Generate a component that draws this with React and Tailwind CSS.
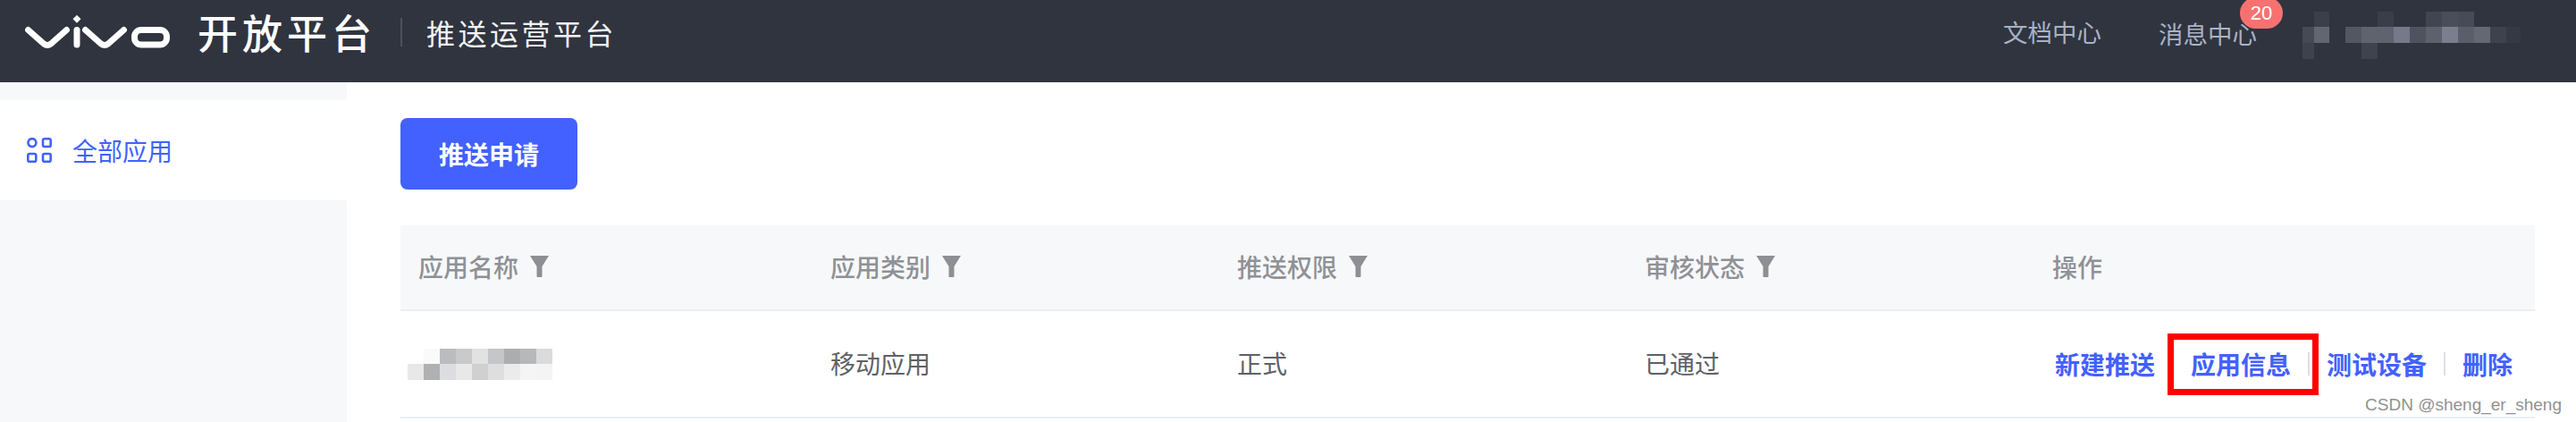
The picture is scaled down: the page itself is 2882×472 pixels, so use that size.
import React from 'react';

const cjk = { fontFamily: '"Noto Sans CJK SC", "Noto Sans", sans-serif' };

// pixelated user name in the header: x, y, w, h, colour
const headerBlur = [
  [13, 0, 17, 17, '#3a3f4a'], [84, 0, 18, 17, '#3b3e49'], [138, 0, 18, 17, '#42454f'], [156, 0, 18, 17, '#4a4e5a'], [174, 0, 18, 17, '#474b58'],
  [0, 17, 13, 18, '#454a55'], [13, 17, 17, 18, '#616672'], [48, 17, 18, 18, '#525863'], [66, 17, 18, 18, '#5f636e'], [84, 17, 18, 18, '#5e636f'],
  [102, 17, 18, 18, '#757a8a'], [120, 17, 18, 18, '#4e5360'], [138, 17, 18, 18, '#5d616d'], [156, 17, 18, 18, '#7a7f90'], [174, 17, 18, 18, '#5a5e6b'],
  [192, 17, 18, 18, '#646875'], [210, 17, 18, 18, '#3f424d'], [228, 17, 16, 18, '#363944'],
  [0, 35, 13, 18, '#3e424d'], [66, 35, 18, 18, '#3f434e'],
];

// pixelated app name in the table
const rowBlur = [
  [18, 0, 18, 17, '#fafafa'], [36, 0, 18, 17, '#bbbcbd'], [54, 0, 18, 17, '#c8c9ca'], [72, 0, 18, 17, '#e2e2e2'], [90, 0, 18, 17, '#c5c6c7'],
  [108, 0, 18, 17, '#acadae'], [126, 0, 18, 17, '#b7b8b9'], [144, 0, 18, 17, '#dbdbdb'],
  [0, 17, 18, 18, '#e8e8e8'], [18, 17, 18, 18, '#b0b1b2'], [36, 17, 18, 18, '#dcdde0'], [54, 17, 18, 18, '#e8e8e8'], [72, 17, 18, 18, '#d0d0d2'],
  [90, 17, 18, 18, '#dedede'], [108, 17, 18, 18, '#ebebeb'], [126, 17, 18, 18, '#f5f5f5'], [144, 17, 18, 18, '#f4f4f4'],
];

const Mosaic = ({ cells, width, height }) => (
  <svg width={width} height={height} viewBox={`0 0 ${width} ${height}`} shapeRendering="crispEdges" className="block shrink-0">
    {cells.map(([x, y, w, h, fill], i) => (
      <rect key={i} x={x} y={y} width={w} height={h} fill={fill} />
    ))}
  </svg>
);

const VivoLogo = () => (
  <svg width="164" height="38" viewBox="28 14 164 38" className="block shrink-0" fill="none" stroke="#fff" strokeWidth="7" strokeLinecap="round" strokeLinejoin="round">
    <path d="M31.5 30.5 L49 46 Q53 49 57 46 L74.5 30.5" />
    <path d="M86 30.5 V47" />
    <path d="M86 13.8 L90.5 18.3 L86 22.8 L81.5 18.3 Z" fill="#fff" stroke="none" />
    <path d="M95.5 30.5 L113 46 Q117 49 121 46 L138.5 30.5" />
    <rect x="150.5" y="30.5" width="36" height="16.5" rx="7.5" />
  </svg>
);

const FilterIcon = () => (
  <svg width="21" height="24" viewBox="0 0 21 24" className="block shrink-0" fill="#8e8f94">
    <path d="M0 0 H21 L13.5 12 V23 Q13.5 24 12.5 24 H8.5 Q7.5 24 7.5 23 V12 Z" />
  </svg>
);

const AppsIcon = () => (
  <svg width="28" height="28" viewBox="0 0 28 28" className="block shrink-0" fill="none" stroke="#4261ff" strokeWidth="2.6">
    <circle cx="5.9" cy="5.6" r="4.5" />
    <rect x="18" y="1.3" width="8.7" height="8.7" rx="1.8" />
    <rect x="1.3" y="18" width="9" height="8.7" rx="1.8" />
    <rect x="18" y="18" width="8.7" height="8.7" rx="1.8" />
  </svg>
);

const columns = ['应用名称', '应用类别', '推送权限', '审核状态'];

const Sep = () => <span className="mx-[19px] h-[26px] w-[2px] shrink-0 bg-[#dcdfe6]" />;

export default function App() {
  return (
    <div className="relative flex h-[472px] w-[2882px] flex-col overflow-hidden bg-white" style={cjk}>
      <header className="flex h-[92px] shrink-0 items-center bg-[#30343f] pb-[20px] pl-[28px] pr-[62px]">
        <VivoLogo />
        <span className="ml-[29px] text-[45px] font-medium leading-[48px] tracking-[5px] text-white whitespace-nowrap">开放平台</span>
        <span className="ml-[27px] h-[32px] w-[2px] bg-[#4d515b]" />
        <span className="ml-[27px] text-[32px] leading-[40px] tracking-[3.5px] text-[#f2f3f5] whitespace-nowrap">推送运营平台</span>
        <div className="ml-auto flex items-center text-[27.5px] leading-[36px] text-[#a9b2c4]">
          <span className="-mt-[2px]">文档中心</span>
          <span className="relative ml-[64px] mt-[2px]">
            消息中心
            <span className="absolute left-[91px] top-[-22px] flex h-[35px] w-[48px] items-center justify-center rounded-full bg-[#f87171] text-[22px] leading-none text-white" style={{ fontFamily: '"Liberation Sans", sans-serif' }}>20</span>
          </span>
          <span className="ml-[51px] mt-[7px]">
            <Mosaic cells={headerBlur} width={244} height={53} />
          </span>
        </div>
      </header>

      <div className="flex flex-1">
        <aside className="w-[388px] shrink-0 bg-[#f7f8fa] pt-[20px]">
          <div className="flex h-[112px] items-center bg-white pl-[30px] text-[28px] text-[#4261ff]">
            <AppsIcon />
            <span className="ml-[23px]">全部应用</span>
          </div>
        </aside>

        <main className="flex-1 pl-[60px] pr-[46px] pt-[40px]">
          <button className="flex h-[80px] w-[198px] items-center justify-center rounded-lg bg-[#4261ff] text-[28px] font-bold text-white">推送申请</button>

          <div className="mt-[40px] grid grid-cols-[461px_455px_456px_456px_1fr] border-b-2 border-b-[#ebeef3]">
            {columns.map((c) => (
              <div key={c} className="flex h-[96px] items-center gap-[13px] border-b-2 border-b-[#ebeef3] bg-[#f7f8fa] pb-[2px] pl-[20px] text-[28px] font-medium text-[#8f9196]">
                <span>{c}</span>
                <FilterIcon />
              </div>
            ))}
            <div className="flex h-[96px] items-center border-b-2 border-b-[#ebeef3] bg-[#f7f8fa] pb-[2px] pl-[20px] text-[28px] font-medium text-[#8f9196]">操作</div>

            <div className="flex h-[118px] items-center pl-[8px]">
              <Mosaic cells={rowBlur} width={162} height={35} />
            </div>
            <div className="flex h-[118px] items-center pb-[2px] pl-[20px] text-[28px] text-[#5f6166]">移动应用</div>
            <div className="flex h-[118px] items-center pb-[2px] pl-[20px] text-[28px] text-[#5f6166]">正式</div>
            <div className="flex h-[118px] items-center pb-[2px] pl-[20px] text-[28px] text-[#5f6166]">已通过</div>
            <div className="flex h-[118px] items-center pl-[23px] text-[28px] font-bold leading-[40px] text-[#4261ff] whitespace-nowrap">
              <span>新建推送</span>
              <Sep />
              <span className="relative">
                应用信息
                <span className="absolute -bottom-[15px] -left-[26px] -right-[31px] -top-[14px] border-[7px] border-[#ff0000]" />
              </span>
              <Sep />
              <span>测试设备</span>
              <Sep />
              <span>删除</span>
            </div>
          </div>
        </main>
      </div>

      <span className="absolute bottom-[7px] right-[16px] text-[19px] leading-[24px] text-[#919191] [text-shadow:0_0_2px_#fff]" style={{ fontFamily: '"Liberation Sans", sans-serif' }}>CSDN @sheng_er_sheng</span>
    </div>
  );
}
